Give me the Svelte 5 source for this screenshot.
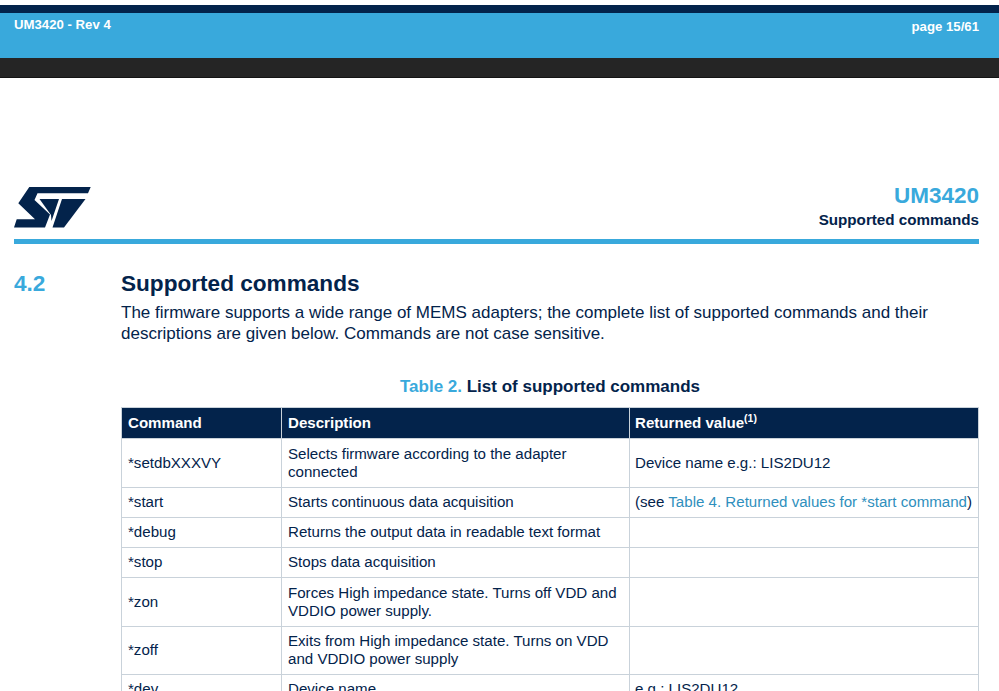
<script lang="ts">
    interface Row {
        cmd: string;
        desc: string[];
        ret?: string;
        link?: boolean;
        tight?: boolean;
    }
    const rows: Row[] = [
        { cmd: '*setdbXXXVY', desc: ['Selects firmware according to the adapter', 'connected'], ret: 'Device name e.g.: LIS2DU12' },
        { cmd: '*start', desc: ['Starts continuous data acquisition'], link: true },
        { cmd: '*debug', desc: ['Returns the output data in readable text format'] },
        { cmd: '*stop', desc: ['Stops data acquisition'] },
        { cmd: '*zon', desc: ['Forces High impedance state. Turns off VDD and', 'VDDIO power supply.'] },
        { cmd: '*zoff', desc: ['Exits from High impedance state. Turns on VDD', 'and VDDIO power supply'], tight: true },
        { cmd: '*dev', desc: ['Device name'], ret: 'e.g.: LIS2DU12' }
    ];
</script>

<div class="viewer">
    <div class="topbar">
        <div class="navy"></div>
        <div class="blue">
            <span class="rev">UM3420 - Rev 4</span>
            <span class="pageno">page 15/61</span>
        </div>
        <div class="dark"></div>
    </div>

    <div class="page">
        <header class="head">
            <svg class="logo" viewBox="0 0 77 41" width="77" height="41" aria-label="ST logo">
                <path fill="#03234b" d="M15.3 0H76.7L74 6.3H23.5L20.5 13L36 27.5L31 40.5H0L2.7 32.3H21L4.3 16.3Z" />
                <path fill="#03234b" d="M25.5 12H45L37.5 34L37 28Z" />
                <path fill="#03234b" d="M48 12H71.5L50 40.5H38.5Z" />
            </svg>
            <div class="head-title">
                <div class="docid">UM3420</div>
                <div class="subject">Supported commands</div>
            </div>
        </header>
        <div class="rule"></div>

        <section class="section">
            <div class="num">4.2</div>
            <div class="body">
                <h2>Supported commands</h2>
                <p>The firmware supports a wide range of MEMS adapters; the complete list of supported commands and their<br />descriptions are given below. Commands are not case sensitive.</p>
                <div class="caption"><span>Table 2.</span> List of supported commands</div>
                <table>
                    <thead>
                        <tr>
                            <th class="c1">Command</th>
                            <th class="c2">Description</th>
                            <th class="c3">Returned value<sup>(1)</sup></th>
                        </tr>
                    </thead>
                    <tbody>
                        {#each rows as row}
                        <tr class:single={row.desc.length === 1} class:tight={row.tight}>
                            <td>{row.cmd}</td>
                            <td>
                                {#each row.desc as line, i}{#if i > 0}<br />{/if}{line}{/each}
                            </td>
                            <td class="c3">
                                {#if row.link}(see <span class="xref">Table 4. Returned values for *start command</span>){:else if row.ret}{row.ret}{/if}
                            </td>
                        </tr>
                        {/each}
                    </tbody>
                </table>
            </div>
        </section>
    </div>
</div>

<style>
    :global(body) {
        margin: 0;
        background: #fff;
        overflow: hidden;
    }
    .viewer {
        height: 691px;
        overflow: hidden;
        font-family: "Liberation Sans", Arial, sans-serif;
        color: #03234b;
    }
    .topbar {
        padding-top: 5px;
    }
    .navy {
        height: 8px;
        background: #03234b;
    }
    .blue {
        height: 45px;
        background: #39a9dc;
        display: flex;
        justify-content: space-between;
        padding: 5px 20px 0 14px;
        box-sizing: border-box;
        color: #fff;
        font-size: 13.2px;
        font-weight: bold;
        line-height: 14px;
    }
    .pageno {
        margin-top: 2px;
    }
    .dark {
        height: 19px;
        background: #252525;
        border-bottom: 1px solid #141414;
    }
    .page {
        padding: 0 20px 0 14px;
    }
    .head {
        display: flex;
        justify-content: space-between;
        align-items: flex-end;
        margin-top: 105px;
    }
    .logo {
        display: block;
        margin-bottom: 2px;
    }
    .head-title {
        text-align: right;
    }
    .docid {
        color: #39a9dc;
        font-size: 22.5px;
        font-weight: bold;
        line-height: 26px;
    }
    .subject {
        font-size: 15.2px;
        font-weight: bold;
        line-height: 20px;
        margin-top: 1px;
    }
    .rule {
        height: 5px;
        background: #39a9dc;
        margin-top: 9px;
    }
    .section {
        display: flex;
        margin-top: 27px;
    }
    .num {
        width: 107px;
        color: #39a9dc;
        font-size: 22.6px;
        font-weight: bold;
        line-height: 26px;
    }
    .body {
        flex: 1;
    }
    h2 {
        margin: 0;
        font-size: 22.6px;
        font-weight: bold;
        line-height: 26px;
    }
    p {
        margin: 5px 0 0;
        font-size: 17px;
        line-height: 21px;
    }
    .caption {
        margin-top: 33px;
        text-align: center;
        font-size: 17px;
        font-weight: bold;
        line-height: 20px;
    }
    .caption span {
        color: #39a9dc;
    }
    table {
        width: 100%;
        margin-top: 10px;
        border-collapse: collapse;
        table-layout: fixed;
        font-size: 15.1px;
        line-height: 18px;
    }
    th, td {
        border: 1px solid #c9d2da;
        padding: 6px;
        text-align: left;
    }
    th {
        background: #03234b;
        color: #fff;
        font-weight: bold;
        line-height: 18px;
    }
    .single td {
        line-height: 17px;
        padding-top: 5px;
        padding-bottom: 7px;
    }
    .tight td {
        padding-top: 5px;
    }
    .c1 {
        width: 147px;
    }
    .c2 {
        width: 335px;
    }
    .c3 {
        padding-left: 5px;
        padding-right: 2px;
        white-space: nowrap;
    }
    sup {
        font-size: 10.5px;
        line-height: 0;
    }
    .xref {
        color: #2f8fbd;
    }
</style>
